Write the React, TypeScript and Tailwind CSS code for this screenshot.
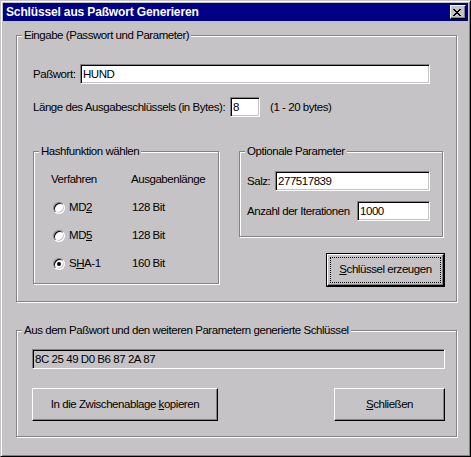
import React from "react";

function Edit({ className = "", value }: { className?: string; value: string }) {
  return (
    <div
      className={`h-[20px] border border-t-[#848284] border-l-[#848284] border-r-white border-b-white shadow-[inset_1px_1px_0_#000,inset_-1px_-1px_0_#c6c3c6] flex items-center pl-[2px] pt-[1px] ${className}`}
    >
      <span className="whitespace-nowrap">{value}</span>
    </div>
  );
}

function Group({
  title,
  className = "",
  children,
}: {
  title: string;
  className?: string;
  children?: React.ReactNode;
}) {
  return (
    <div className={`relative border border-[#848284] shadow-[inset_1px_1px_0_#fff,1px_1px_0_#fff] ${className}`}>
      <span className="absolute left-[5px] top-[-8px] px-[2px] bg-[#c6c3c6] leading-[14px] whitespace-nowrap">
        {title}
      </span>
      {children}
    </div>
  );
}

function Btn({ className = "", children }: { className?: string; children: React.ReactNode }) {
  return (
    <div
      className={`flex items-center justify-center border border-t-white border-l-white border-r-black border-b-black shadow-[inset_-1px_-1px_0_#848284] ${className}`}
    >
      {children}
    </div>
  );
}

function Radio({ checked = false }: { checked?: boolean }) {
  return (
    <span className="w-[12px] h-[12px] shrink-0 rounded-full border border-t-[#848284] border-l-[#848284] border-r-white border-b-white bg-white shadow-[inset_1px_1px_0_#000,inset_-1px_-1px_0_#c6c3c6] flex items-center justify-center">
      {checked && <span className="w-[4px] h-[4px] rounded-full bg-black" />}
    </span>
  );
}

function CloseGlyph() {
  const rows = ["11000011", "01100110", "00111100", "00011000", "00111100", "01100110", "11000011"];
  return (
    <svg width="8" height="7" viewBox="0 0 8 7" shapeRendering="crispEdges">
      {rows.map((r, y) =>
        r.split("").map((c, x) => (c === "1" ? <rect key={`${x}-${y}`} x={x} y={y} width="1" height="1" fill="#000" /> : null))
      )}
    </svg>
  );
}

export default function App() {
  return (
    <div className="w-[471px] h-[457px] bg-[#c6c3c6] border border-t-[#c6c3c6] border-l-[#c6c3c6] border-r-black border-b-black shadow-[inset_1px_1px_0_#fff,inset_-1px_-1px_0_#848284] p-[2px] text-black text-[11.5px] tracking-[-0.45px] font-['Liberation_Sans',Arial,sans-serif] flex flex-col overflow-hidden">
      {/* Title bar */}
      <div className="h-[18px] bg-[#000084] flex items-center justify-between pl-[3px] pr-[2px] shrink-0">
        <span className="text-white font-bold text-[12px] tracking-[-0.15px] leading-none">
          Schlüssel aus Paßwort Generieren
        </span>
        <div className="w-[16px] h-[14px] bg-[#c6c3c6] border border-t-white border-l-white border-r-black border-b-black shadow-[inset_-1px_-1px_0_#848284] pl-[2px] pt-[3px]">
          <CloseGlyph />
        </div>
      </div>

      {/* Eingabe group */}
      <Group title="Eingabe (Passwort und Parameter)" className="ml-[13px] mt-[14px] w-[441px] h-[267px] shrink-0">
        <div className="flex flex-col pl-[16px]">
          <div className="mt-[28px] h-[20px] flex items-center">
            <span className="w-[47px] pt-[2px]">Paßwort:</span>
            <Edit className="w-[350px] bg-white" value="HUND" />
          </div>
          <div className="mt-[13px] h-[20px] flex items-center">
            <span className="w-[197px] whitespace-nowrap pt-[2px]">Länge des Ausgabeschlüssels (in Bytes):</span>
            <Edit className="w-[30px] bg-white" value="8" />
            <span className="ml-[10px] whitespace-nowrap pt-[2px]">(1 - 20 bytes)</span>
          </div>

          <div className="mt-[34px] flex items-start">
            <Group title="Hashfunktion wählen" className="w-[186px] h-[133px] shrink-0">
              <div className="pt-[14px] pl-[17px] flex flex-col">
                <div className="h-[28px] flex items-center">
                  <span className="w-[80px]">Verfahren</span>
                  <span>Ausgabenlänge</span>
                </div>
                <div className="h-[28px] flex items-center">
                  <div className="w-[81px] flex items-center pl-[2px]">
                    <Radio />
                    <span className="ml-[4px]">
                      MD<span className="underline">2</span>
                    </span>
                  </div>
                  <span>128 Bit</span>
                </div>
                <div className="h-[28px] flex items-center">
                  <div className="w-[81px] flex items-center pl-[2px]">
                    <Radio />
                    <span className="ml-[4px]">
                      MD<span className="underline">5</span>
                    </span>
                  </div>
                  <span>128 Bit</span>
                </div>
                <div className="h-[28px] flex items-center">
                  <div className="w-[81px] flex items-center pl-[2px]">
                    <Radio checked />
                    <span className="ml-[4px]">
                      S<span className="underline">H</span>A-1
                    </span>
                  </div>
                  <span>160 Bit</span>
                </div>
              </div>
            </Group>

            <div className="ml-[20px] w-[206px] flex flex-col">
              <Group title="Optionale Parameter" className="w-[204px] h-[86px]">
                <div className="pl-[7px] pt-[19px] flex flex-col">
                  <div className="h-[20px] flex items-center">
                    <span className="w-[28px] pt-[2px]">Salz:</span>
                    <Edit className="w-[155px] bg-white" value="277517839" />
                  </div>
                  <div className="mt-[10px] h-[20px] flex items-center">
                    <span className="w-[110px] whitespace-nowrap pt-[2px]">Anzahl der Iterationen</span>
                    <Edit className="w-[73px] bg-white" value="1000" />
                  </div>
                </div>
              </Group>
              <div className="mt-[16px] self-end w-[119px] h-[34px] border border-black">
                <div className="w-full h-full border border-t-white border-l-white border-r-black border-b-black shadow-[inset_-1px_-1px_0_#848284] p-[2px]">
                  <div className="w-full h-full border border-dotted border-black flex items-center justify-center">
                    <span>
                      <span className="underline">S</span>chlüssel erzeugen
                    </span>
                  </div>
                </div>
              </div>
            </div>
          </div>
        </div>
      </Group>

      {/* Output group */}
      <Group
        title="Aus dem Paßwort und den weiteren Parametern generierte Schlüssel"
        className="ml-[13px] mt-[28px] w-[441px] h-[107px] shrink-0"
      >
        <div className="pl-[15px] pt-[18px] flex flex-col">
          <Edit className="w-[413px]" value="8C 25 49 D0 B6 87 2A 87" />
          <div className="mt-[19px] w-[413px] flex justify-between">
            <Btn className="w-[186px] h-[33px]">
              <span>
                In die Zwischenablage <span className="underline">k</span>opieren
              </span>
            </Btn>
            <Btn className="w-[111px] h-[33px]">
              <span>
                <span className="underline">S</span>chließen
              </span>
            </Btn>
          </div>
        </div>
      </Group>
    </div>
  );
}
